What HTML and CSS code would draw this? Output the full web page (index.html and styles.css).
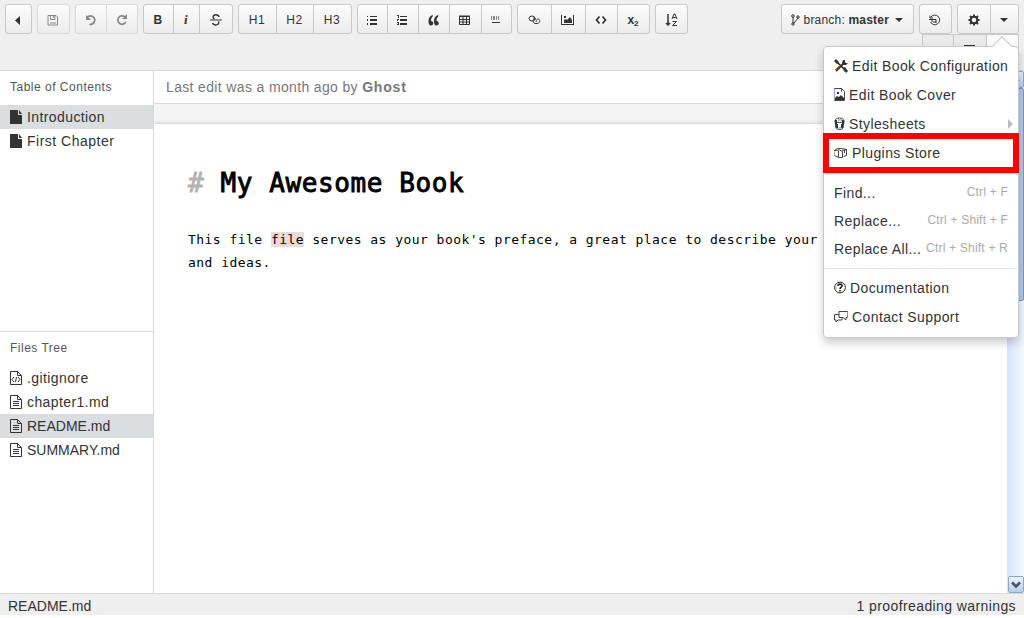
FILE: index.html
```html
<!DOCTYPE html>
<html lang="en">
<head>
<meta charset="utf-8">
<title>My Awesome Book</title>
<link rel="stylesheet" href="styles.css">
</head>
<body>
<div class="app">
  <header class="toolbar">
    <div class="group"><button class="w25"><svg width="14" height="14"><path d="M9 3v9L4 7.500z"/></svg></button></div>
    <div class="group off"><button class="w31"><svg width="12" height="12"><path fill="none" stroke="currentColor" d="M1 1.500h8l1.500 1.500v8h-9.500zM3.500 1.500v4h4.500v-4M6.500 2v2M3 9h6"/></svg></button></div>
    <div class="group off"><button class="w30"><svg width="12" height="12"><path fill="none" stroke="currentColor" stroke-width="1.700" d="M2.200 3.500A4.200 4.200 0 1 1 4.500 10.200"/><path d="M1 1v5h5z"/></svg></button><button class="w31"><svg width="12" height="12"><path fill="none" stroke="currentColor" stroke-width="1.700" d="M9 3A4.200 4.200 0 1 0 9.800 8"/><path d="M11 0v5H6z"/></svg></button></div>
    <div class="group"><button class="w29 b">B</button><button class="w26 i">i</button><button class="w33"><svg width="12" height="12"><path fill="none" stroke="currentColor" stroke-width="1.400" d="M9 3C8.500 0 3 0 3 3c0 1 .5 1.500 1.500 2M8.500 7.500c1.500 4-5 4.500-6 1.500"/><path d="M0 5.500h12v1H0z"/></svg></button></div>
    <div class="group"><button class="w37">H1</button><button class="w37">H2</button><button class="w38">H3</button></div>
    <div class="group"><button class="w29"><svg width="11" height="10"><path d="M0 1h1v1H0zM0 4h1v2H0zM0 8h1v2H0zM3 1h7v1H3zM3 4h7v2H3zM3 8h7v2H3z"/></svg></button><button class="w31"><svg width="11" height="10"><path d="M0 0h2v3H1V1H0zM0 4h2v1H1v1H0zM0 7h2v3H0V9h1V8H0zM3 1h7v1H3zM3 4h7v2H3zM3 8h7v2H3z"/></svg></button><button class="w31"><svg width="12" height="11"><path d="M4.500 0C1.500 1 .5 3.500.5 6.500.5 9 1.500 10.500 3 10.500c3 0 3-4.500 0-4.500C3 4 3.500 2.500 5 1zM10 0C7 1 6 3.500 6 6.500c0 2.500 1 4 2.500 4 3 0 3-4.500 0-4.500 0-2 .5-3.500 2-5z"/></svg></button><button class="w32"><svg width="12" height="10"><path fill="none" stroke="currentColor" d="M.5 1.500h10v8H.5zM0 1h11M0 4.500h11M0 7h11M4 1v8M7.500 1v8"/></svg></button><button class="w30"><svg width="10" height="10"><path fill="#888" d="M0 1h1v4H0zM2 1h2v4H2zM5 1h1v4H5zM7 1h1v4H7z"/><path d="M1 7h8v1H1z"/></svg></button></div>
    <div class="group"><button class="w33"><svg width="13" height="12"><g fill="none" stroke="currentColor"><ellipse cx="4" cy="4.500" rx="3" ry="2.500"/><path d="M6 5c-2 3 0 5 3 4.500 4-.5 3.500-5 0-4.500M5 4c3 0 4 2 3 4"/></g></svg></button><button class="w34"><svg width="14" height="12"><path d="M0 1h1v9h12v1H0zM12 1h1v10h-1zM3 9V6l2-1 1 1 3-3 2 3v3zM3 2h2v2H3z"/></svg></button><button class="w32"><svg width="12" height="10"><path fill="none" stroke="currentColor" stroke-width="1.700" d="M4.500 1.500L1.500 5l3 3.500M7.500 1.500l3 3.500-3 3.500"/></svg></button><button class="w32 sub">x<sub>2</sub></button></div>
    <div class="group"><button class="w31"><svg width="13" height="14"><path fill="none" stroke="currentColor" stroke-width="1.500" d="M3 1v11M1 10l2 2 2-2"/><path fill="none" stroke="currentColor" d="M7 6l2-5h1l2 5M8 4.500h3M7.500 8.500h4l-4 4h4.500"/></svg></button></div>
    <div class="group branch"><button class="w131"><svg width="9" height="12"><path fill="none" stroke="currentColor" d="M2 3v6M7 4L2.500 9.500M7 3v1"/><g fill="none" stroke="currentColor"><circle cx="2" cy="2" r="1.300"/><circle cx="2" cy="10" r="1.200"/><circle cx="7" cy="3" r="1.200"/></g></svg><span>&nbsp;branch: <b>master</b></span><i class="caret"></i></button></div>
    <div class="group"><button class="w31"><svg width="12" height="12"><path fill="none" stroke="currentColor" d="M2 3a4.800 4.800 0 1 1-.5 5M1 1.500V4h3M0 5.500h7V9M3 6v2M7 8H4"/></svg></button></div>
    <div class="group"><button class="w32"><svg width="12" height="12"><circle cx="6" cy="6" r="3.300" fill="none" stroke="currentColor" stroke-width="2"/><path fill="none" stroke="currentColor" stroke-width="2" d="M6 .5v2M6 9.500v2M.5 6h2M9.500 6h2M2 2l1.500 1.500M8.500 8.500L10 10M2 10l1.500-1.500M8.500 3.500L10 2"/></svg></button><button class="w28"><i class="caret"></i></button></div>
    <div class="lower"><button class="w30"></button><button class="w33"><i class="dash"></i></button><button class="w32 lit"></button></div>
  </header>
  <div class="workspace">
    <aside class="side">
      <section class="toc">
        <h2>Table of Contents</h2>
        <a class="row on"><svg width="12" height="14"><path d="M0 0h8v5h4v9H0zM9 0l3 4H9z"/></svg><span>Introduction</span></a>
        <a class="row"><svg width="12" height="14"><path d="M0 0h8v5h4v9H0zM9 0l3 4H9z"/></svg><span class="chap">First Chapter</span></a>
      </section>
      <section class="files">
        <h2>Files Tree</h2>
        <a class="row"><svg width="12" height="14"><path fill="none" stroke="currentColor" d="M.5.500h7l4 4v9H.5zM7.500.500v4h4M4 6L2 8.500 4 11M8 6l2 2.500L8 11M6.500 6l-1 5"/></svg><span>.gitignore</span></a>
        <a class="row"><svg width="12" height="14"><path fill="none" stroke="currentColor" d="M.5.500h7l4 4v9H.5zM7.500.500v4h4M3 6.500h6M3 8.500h6M3 10.500h6"/></svg><span>chapter1.md</span></a>
        <a class="row on"><svg width="12" height="14"><path fill="none" stroke="currentColor" d="M.5.500h7l4 4v9H.5zM7.500.500v4h4M3 6.500h6M3 8.500h6M3 10.500h6"/></svg><span class="caps">README.md</span></a>
        <a class="row"><svg width="12" height="14"><path fill="none" stroke="currentColor" d="M.5.500h7l4 4v9H.5zM7.500.500v4h4M3 6.500h6M3 8.500h6M3 10.500h6"/></svg><span class="caps">SUMMARY.md</span></a>
      </section>
    </aside>
    <main class="editor">
      <div class="status">Last edit was a month ago by <b>Ghost</b></div>
      <div class="stage">
        <article class="page">
          <h1><span class="hash">#</span> My Awesome Book</h1>
          <p>This file <mark>file</mark> serves as your book's preface, a great place to describe your<br>and ideas.</p>
        </article>
      </div>
      <div class="scroll"><span class="sbtn up"><svg width="9" height="7"><path d="M1 5l3.500-3.500L8 5" fill="none" stroke="#4d6185" stroke-width="2"/></svg></span><span class="thumb"></span><span class="sbtn down"><svg width="10" height="8"><path d="M1 1.500L5 5.500l4-4" fill="none" stroke="#444f63" stroke-width="2.500"/></svg></span></div>
    </main>
  </div>
  <footer class="foot"><span class="caps">README.md</span><span>1 proofreading warnings</span></footer>
  <nav class="menu">
    <a><svg width="14" height="14"><path stroke="#222" stroke-width="1.600" d="M3 3l8 8"/><path stroke="#333" stroke-width="2" d="M2 12l8-8"/><path d="M9 1h2v2l1 1h2L12 6H9L8 4zM0 2l2-2 3 3-2 2zM9 9l2-1 3 4-2 2z"/><path stroke="#c78333" d="M1 11l5-5"/><path stroke="#4f9bcc" d="M9 11l2 2"/></svg><span>Edit Book Configuration</span></a>
    <a><svg width="11" height="13"><path fill="none" stroke="#445" d="M.5.500h7l3 3v9H.5zM7.500.500v3"/><path d="M1 12v-2l2-2 2 1 2-2 3 3v2zM3 4h2v2H3z"/><path stroke="#84a9e2" d="M.5 1v11"/></svg><span>Edit Book Cover</span></a>
    <a><svg width="11" height="13"><path fill="none" stroke="#333" d="M1 4c0-4 9-4 9 0M1 4c0 2 9 2 9 0M1 4l1 7c1 2 6 2 7 0l1-7"/><path d="M1 3h2v4H1zM8 3h2v4H8zM2 7h2v4H2zM7 7h2v4H7z"/><path stroke="#5e92c9" d="M4 3h4M4 11h3"/></svg><span>Stylesheets</span><i class="arrow"></i></a>
    <a><svg width="14" height="13"><path fill="none" stroke="#444" d="M.5 4.500l3-2h4l5 1v6l-3 1M.5 4.500v5l4 2h4v-6l-3-1.500zM4.500 5v6M8 4.500l5-1M10.500 4v3"/><path stroke="#e3b36e" d="M.5 5v4"/></svg><span>Plugins Store</span></a>
    <hr class="first">
    <a class="short"><span>Find...</span><kbd>Ctrl + F</kbd></a>
    <a class="short"><span>Replace...</span><kbd>Ctrl + Shift + F</kbd></a>
    <a class="short"><span>Replace All...</span><kbd>Ctrl + Shift + R</kbd></a>
    <hr class="second">
    <a><svg width="12" height="13"><circle cx="6" cy="6.500" r="5.400" fill="none" stroke="#222"/><path fill="none" stroke="#222" stroke-width="1.600" d="M4 5c0-2.500 4-2.500 4 0 0 1-2 1.500-2 3M6 9v1.500"/><path stroke="#dfa55b" d="M2 5v3"/></svg><span>Documentation</span></a>
    <a><svg width="14" height="13"><path fill="none" stroke="#444" d="M5 1.500h8.500v6H12V10L9 7.500H5zM5 4.500H.5V10H2v2l2-2h4V8"/><path stroke="#5d9bcf" d="M13.500 2v5"/></svg><span>Contact Support</span></a>
    <div class="notch"></div>
    <div class="focus"></div>
  </nav>
</div>
</body>
</html>
```
FILE: styles.css
```css
* { box-sizing: border-box; }
body { margin: 0; background: #fff; color: #333; font: 14px/20px "Liberation Sans", Arial, sans-serif; letter-spacing: .4px; }
svg { display: block; flex: none; fill: currentColor; }
.app { position: relative; width: 1024px; height: 618px; overflow: hidden; display: flex; flex-direction: column; }
.toolbar { position: relative; height: 71px; flex: none; padding: 4px 5px 0; display: flex; gap: 5px; align-items: flex-start; background: #efefef; border-bottom: 1px solid #d9d9d9; }
.group { display: flex; height: 30px; border: 1px solid #c8c8c8; border-radius: 3px; background: linear-gradient(#fcfcfc, #ececec); overflow: hidden; flex: none; }
.group.off { border-color: #d9d9d9; color: #888; }
button { display: flex; align-items: center; justify-content: center; height: 28px; padding: 2px 1px 0 0; border: 0; background: none; color: inherit; font: 12px "Liberation Sans", Arial, sans-serif; letter-spacing: .5px; flex: none; }
button + button { border-left: 1px solid #c8c8c8; }
.off button + button { border-color: #d9d9d9; }
.w25 { width: 25px; } .w26 { width: 26px; } .w28 { width: 28px; } .w29 { width: 29px; } .w30 { width: 30px; } .w31 { width: 31px; } .w32 { width: 32px; }
.w33 { width: 33px; } .w34 { width: 34px; } .w37 { width: 37px; } .w38 { width: 38px; } .w131 { width: 131px; }
.b { font-weight: bold; }
.i { font: italic bold 13px "Liberation Serif", serif; }
.sub { font-weight: bold; letter-spacing: 0; }
.sub sub { font-size: 8px; line-height: 8px; align-self: flex-end; margin-bottom: 5px; }
.branch { margin-left: auto; }
.branch button { letter-spacing: .2px; }
.caret { width: 0; height: 0; border: 4px solid transparent; border-top-color: #333; border-bottom: 0; }
.branch .caret { margin-left: 6px; }
.lower { position: absolute; left: 922px; top: 34px; display: flex; height: 28px; border: 1px solid #c8c8c8; background: #eaeaea; }
.lower button { align-items: flex-start; padding-top: 10px; }
.dash { width: 11px; height: 1px; background: #333; }
.lit { background: #fafafa; }
.workspace { flex: 1; min-height: 0; display: flex; }
.side { width: 154px; border-right: 1px solid #d9d9d9; display: flex; flex-direction: column; }
.toc { height: 260px; }
.files { flex: 1; border-top: 1px solid #d9d9d9; }
.side h2 { margin: 0; height: 34px; padding: 0 10px; color: #555; font-size: 12px; font-weight: normal; line-height: 32px; letter-spacing: .5px; }
.row { display: flex; align-items: center; gap: 5px; height: 24px; padding-left: 10px; }
.row.on { background: #dadee1; }
.caps { letter-spacing: 0; }
.chap { letter-spacing: .5px; }
.editor { flex: 1; display: grid; grid-template: 33px 1fr / 1fr 17px; }
.status { grid-column: 1 / 3; padding-left: 12px; line-height: 33px; border-bottom: 1px solid #d9d9d9; color: #777; letter-spacing: .35px; }
.status b { letter-spacing: .8px; }
.stage { padding-top: 20px; background: #f4f4f4; min-width: 0; }
.page { height: 100%; padding: 40px 0 0 34px; background: #fff; box-shadow: 0 0 4px #bbb; overflow: hidden; clip-path: inset(-4px 0 0 0); color: #000; font-family: "DejaVu Sans Mono", monospace; white-space: nowrap; }
.page h1 { margin: 0; font-size: 26px; line-height: 38px; font-weight: normal; letter-spacing: .6px; -webkit-text-stroke: .9px currentColor; }
.hash { color: #b3b3b3; }
.page p { margin: 26px 0 0; font-size: 13px; line-height: 23px; letter-spacing: .46px; }
mark { background: #f0d9d9; color: inherit; }
.scroll { position: relative; margin-top: -33px; display: flex; flex-direction: column; background: linear-gradient(90deg, #d5e5fc, #f4f8ff); }
.sbtn { height: 17px; border: 1px solid #8ba5c7; border-radius: 2px; display: flex; align-items: center; justify-content: center; background: linear-gradient(#eaf2fc, #b9cce3); flex: none; }
.down { margin: auto 0 0 1px; }
.thumb { height: 213px; border: 1px solid #7d97bb; border-radius: 2px; background: #b3c6e2; }
.foot { height: 22px; margin-bottom: 3px; flex: none; display: flex; justify-content: space-between; padding: 2px 8px 0; background: #efefef; border-top: 1px solid #d9d9d9; }
.menu { position: absolute; left: 823px; top: 46px; width: 196px; height: 292px; padding: 4px 0; background: #fff; border: 1px solid #c8c8c8; border-radius: 4px; box-shadow: 0 5px 10px rgba(0,0,0,.2); }
.menu a { display: flex; align-items: center; height: 29px; padding: 0 10px; gap: 4px; white-space: nowrap; }
.menu .short { height: 28px; justify-content: space-between; }
.menu hr { height: 1px; border: 0; background: #e2e2e2; }
.menu .first { margin: 6px 1px 5px; }
.menu .second { margin: 5px 1px 4px; }
kbd { color: #aaa; font: 12px "Liberation Sans", Arial, sans-serif; letter-spacing: .2px; margin-top: -3px; }
.arrow { margin-left: auto; margin-right: -5px; border: 5px solid transparent; border-left-color: #bbb; border-right: 0; }
.notch { position: absolute; top: -8px; left: 171px; width: 14px; height: 14px; transform: rotate(45deg); background: #fff; border: 1px solid #c8c8c8; border-width: 1px 0 0 1px; }
.focus { position: absolute; left: -1px; top: 86px; width: 196px; height: 40px; border: 6px solid #f00; }
```
